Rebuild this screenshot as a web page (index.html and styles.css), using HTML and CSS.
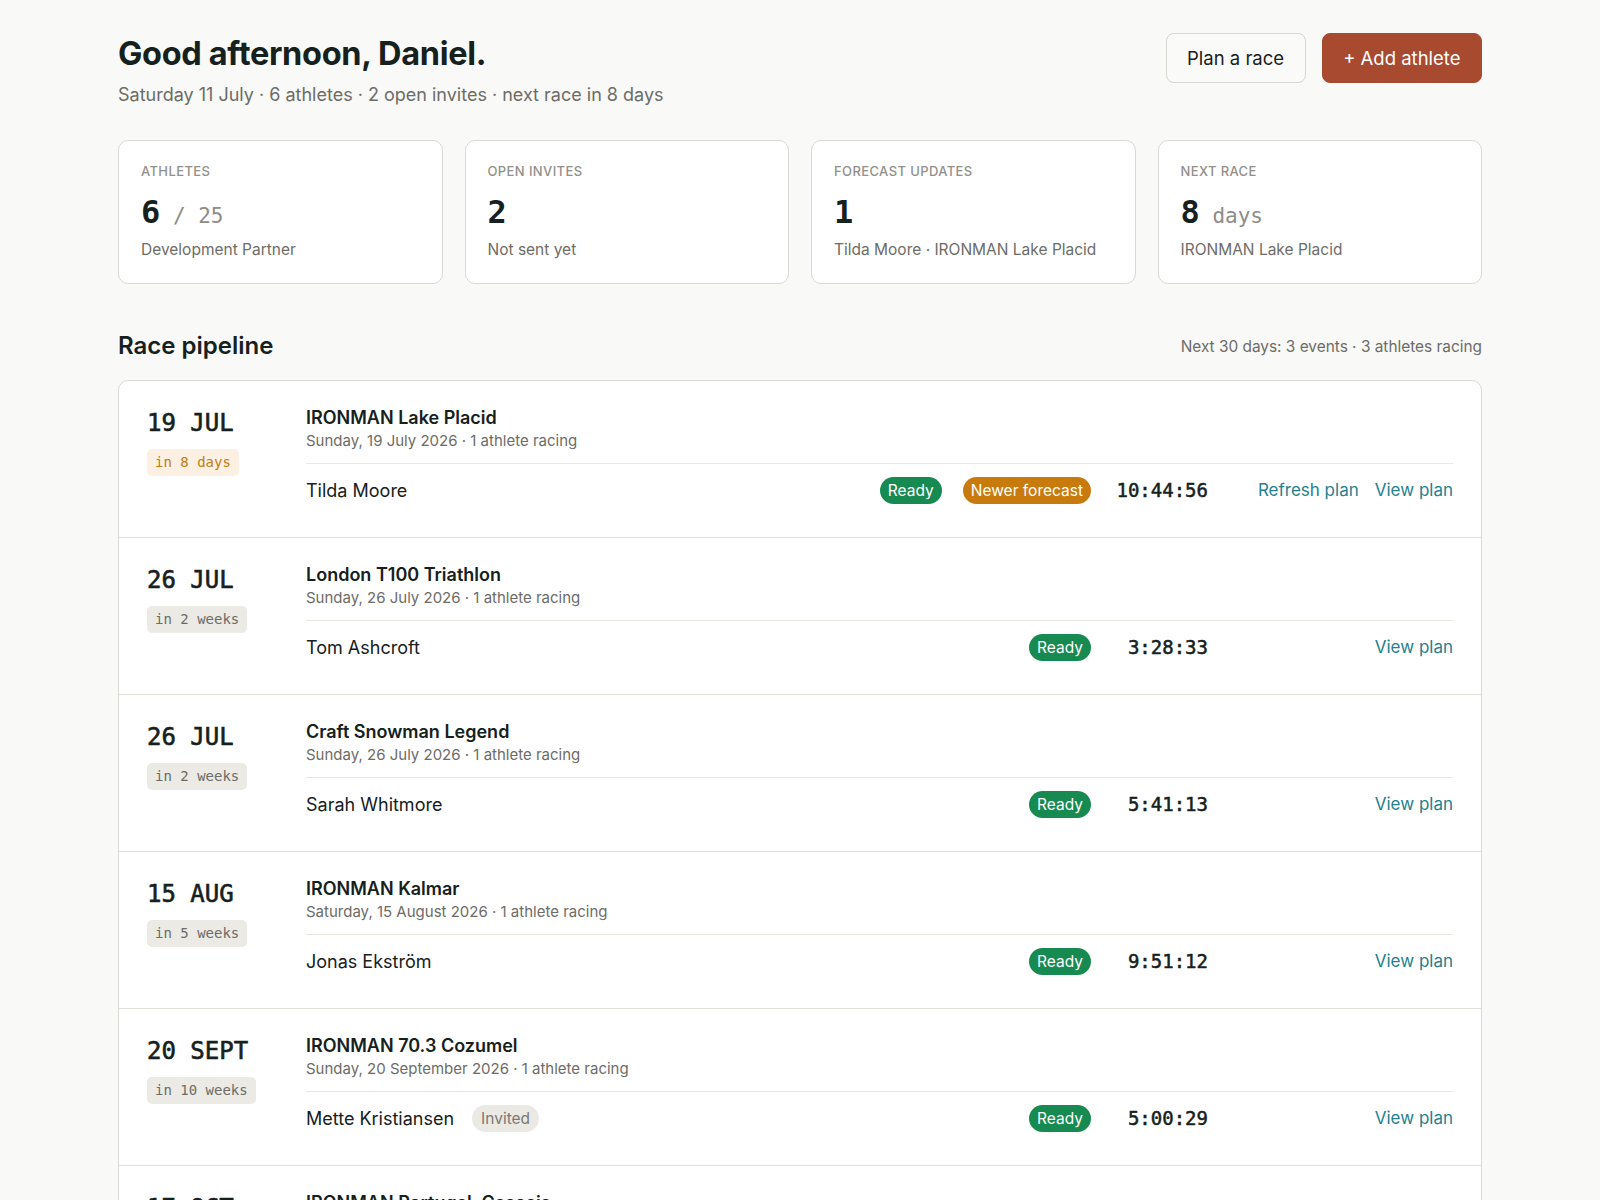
FILE: index.html
```html
<!DOCTYPE html>
<html lang="en">
<head>
    <meta charset="UTF-8">
    <meta name="viewport" content="width=device-width, initial-scale=1.0">
    <title>Coach Dashboard</title>
    <link rel="stylesheet" href="styles.css">
</head>
<body>
    <main class="page">
        <header class="top">
            <div>
                <h1>Good afternoon, Daniel.</h1>
                <p class="meta">Saturday 11 July · 6 athletes · 2 open invites · next race in 8 days</p>
            </div>
            <div class="top-actions">
                <button class="btn">Plan a race</button>
                <button class="btn btn-primary">+ Add athlete</button>
            </div>
        </header>

        <section class="stats">
            <div class="stat">
                <div class="stat-label">Athletes</div>
                <div class="stat-value">6<span class="stat-unit"> / 25</span></div>
                <div class="stat-sub">Development Partner</div>
            </div>
            <div class="stat">
                <div class="stat-label">Open invites</div>
                <div class="stat-value">2</div>
                <div class="stat-sub">Not sent yet</div>
            </div>
            <div class="stat">
                <div class="stat-label">Forecast updates</div>
                <div class="stat-value">1</div>
                <div class="stat-sub">Tilda Moore · IRONMAN Lake Placid</div>
            </div>
            <div class="stat">
                <div class="stat-label">Next race</div>
                <div class="stat-value">8<span class="stat-unit"> days</span></div>
                <div class="stat-sub">IRONMAN Lake Placid</div>
            </div>
        </section>

        <div class="section-head">
            <h2>Race pipeline</h2>
            <span class="section-note">Next 30 days: 3 events · 3 athletes racing</span>
        </div>

        <section class="pipeline">
            <div class="race">
                <div class="race-date">
                    <div class="date">19 JUL</div>
                    <span class="when soon">in 8 days</span>
                </div>
                <div class="race-body">
                    <div class="race-name">IRONMAN Lake Placid</div>
                    <div class="race-sub">Sunday, 19 July 2026 · 1 athlete racing</div>
                    <div class="athlete">
                        <span class="athlete-name">Tilda Moore</span>
                        <div class="pills">
                            <span class="pill ready">Ready</span>
                            <span class="pill newer">Newer forecast</span>
                        </div>
                        <span class="time">10:44:56</span>
                        <div class="links">
                            <a href="#">Refresh plan</a>
                            <a href="#">View plan</a>
                        </div>
                    </div>
                </div>
            </div>

            <div class="race">
                <div class="race-date">
                    <div class="date">26 JUL</div>
                    <span class="when">in 2 weeks</span>
                </div>
                <div class="race-body">
                    <div class="race-name">London T100 Triathlon</div>
                    <div class="race-sub">Sunday, 26 July 2026 · 1 athlete racing</div>
                    <div class="athlete">
                        <span class="athlete-name">Tom Ashcroft</span>
                        <div class="pills">
                            <span class="pill ready">Ready</span>
                        </div>
                        <span class="time">3:28:33</span>
                        <div class="links">
                            <a href="#">View plan</a>
                        </div>
                    </div>
                </div>
            </div>

            <div class="race">
                <div class="race-date">
                    <div class="date">26 JUL</div>
                    <span class="when">in 2 weeks</span>
                </div>
                <div class="race-body">
                    <div class="race-name">Craft Snowman Legend</div>
                    <div class="race-sub">Sunday, 26 July 2026 · 1 athlete racing</div>
                    <div class="athlete">
                        <span class="athlete-name">Sarah Whitmore</span>
                        <div class="pills">
                            <span class="pill ready">Ready</span>
                        </div>
                        <span class="time">5:41:13</span>
                        <div class="links">
                            <a href="#">View plan</a>
                        </div>
                    </div>
                </div>
            </div>

            <div class="race">
                <div class="race-date">
                    <div class="date">15 AUG</div>
                    <span class="when">in 5 weeks</span>
                </div>
                <div class="race-body">
                    <div class="race-name">IRONMAN Kalmar</div>
                    <div class="race-sub">Saturday, 15 August 2026 · 1 athlete racing</div>
                    <div class="athlete">
                        <span class="athlete-name">Jonas Ekström</span>
                        <div class="pills">
                            <span class="pill ready">Ready</span>
                        </div>
                        <span class="time">9:51:12</span>
                        <div class="links">
                            <a href="#">View plan</a>
                        </div>
                    </div>
                </div>
            </div>

            <div class="race">
                <div class="race-date">
                    <div class="date">20 SEPT</div>
                    <span class="when">in 10 weeks</span>
                </div>
                <div class="race-body">
                    <div class="race-name">IRONMAN 70.3 Cozumel</div>
                    <div class="race-sub">Sunday, 20 September 2026 · 1 athlete racing</div>
                    <div class="athlete">
                        <span class="athlete-name">Mette Kristiansen <span class="pill invited">Invited</span></span>
                        <div class="pills">
                            <span class="pill ready">Ready</span>
                        </div>
                        <span class="time">5:00:29</span>
                        <div class="links">
                            <a href="#">View plan</a>
                        </div>
                    </div>
                </div>
            </div>

            <div class="race">
                <div class="race-date">
                    <div class="date">17 OCT</div>
                    <span class="when">in 14 weeks</span>
                </div>
                <div class="race-body">
                    <div class="race-name">IRONMAN Portugal, Cascais</div>
                    <div class="race-sub">Saturday, 17 October 2026 · 1 athlete racing</div>
                    <div class="athlete">
                        <span class="athlete-name">Jonas Ekström</span>
                        <div class="pills">
                            <span class="pill ready">Ready</span>
                        </div>
                        <span class="time">9:12:40</span>
                        <div class="links">
                            <a href="#">View plan</a>
                        </div>
                    </div>
                </div>
            </div>
        </section>
    </main>
</body>
</html>
```

FILE: styles.css
```css
body {
    margin: 0;
    background: #f9f9f7;
    color: #16211d;
    font-family: 'Inter', 'Noto Sans', sans-serif;
}
.page {
    max-width: 1364px;
    margin: 0 auto;
    padding: 35px 0 40px;
}
.top {
    display: flex;
    justify-content: space-between;
    align-items: flex-start;
}
h1 {
    margin: 0;
    font-size: 32.5px;
    line-height: 38px;
    font-weight: 700;
    letter-spacing: -0.01em;
}
.meta {
    margin: 9px 0 0;
    font-size: 18px;
    line-height: 26px;
    color: #6d6c67;
}
.top-actions {
    display: flex;
    gap: 16px;
    margin-top: -2px;
}
.btn {
    height: 50px;
    padding: 0 20.5px;
    border: 1px solid #d7d6d1;
    border-radius: 8px;
    background: #fafaf8;
    color: #16211d;
    font-family: inherit;
    font-size: 18.5px;
    cursor: pointer;
}
.btn-primary {
    background: #a84a2f;
    border-color: #a84a2f;
    color: #fff;
}
.stats {
    display: grid;
    grid-template-columns: repeat(4, 1fr);
    gap: 22px;
    margin-top: 32px;
}
.stat {
    background: #fff;
    border: 1px solid #dad9d4;
    border-radius: 10px;
    padding: 21px 22px 22px;
}
.stat-label {
    font-size: 13px;
    line-height: 18px;
    text-transform: uppercase;
    letter-spacing: 0.03em;
    color: #919089;
    font-weight: 500;
}
.stat-value {
    margin-top: 12px;
    font-family: 'DejaVu Sans Mono', monospace;
    font-size: 32px;
    line-height: 40px;
    font-weight: 700;
}
.stat-unit {
    font-size: 21px;
    line-height: 1;
    font-weight: 400;
    color: #8d8c86;
}
.stat-sub {
    margin-top: 7px;
    font-size: 15.5px;
    line-height: 22px;
    color: #6d6c67;
}
.section-head {
    display: flex;
    justify-content: space-between;
    align-items: center;
    margin-top: 46px;
}
h2 {
    margin: 0;
    font-size: 24px;
    line-height: 32px;
    font-weight: 600;
}
.section-note {
    font-size: 15.4px;
    color: #6d6c67;
}
.pipeline {
    margin-top: 18px;
    background: #fff;
    border: 1px solid #dad9d4;
    border-radius: 10px;
    overflow: hidden;
}
.race {
    display: flex;
    gap: 24px;
    padding: 25px 28px 31px;
    border-bottom: 1px solid #e0dfda;
}
.race-date {
    width: 135px;
    flex-shrink: 0;
    padding-top: 1px;
}
.date {
    font-family: 'DejaVu Sans Mono', monospace;
    font-size: 24px;
    line-height: 32px;
    font-weight: 400;
    -webkit-text-stroke: 0.6px currentColor;
}
.when {
    display: inline-block;
    margin-top: 10px;
    padding: 0 8px;
    height: 27px;
    line-height: 27px;
    border-radius: 5px;
    background: #ebeae5;
    color: #6d6c67;
    font-family: 'DejaVu Sans Mono', monospace;
    font-size: 14px;
}
.when.soon {
    background: #fbf0e1;
    color: #c57b16;
}
.race-body {
    flex: 1;
}
.race-name {
    font-size: 18px;
    line-height: 24px;
    font-weight: 600;
}
.race-sub {
    font-size: 15px;
    line-height: 22px;
    color: #6d6c67;
}
.athlete {
    display: flex;
    align-items: center;
    margin-top: 11px;
    padding-top: 10px;
    border-top: 1px solid #e8e7e2;
    min-height: 32px;
}
.athlete-name {
    flex: 1;
    display: flex;
    align-items: center;
    gap: 18px;
    font-size: 18px;
}
.pills {
    display: flex;
    gap: 21px;
}
.pill {
    display: inline-block;
    height: 27px;
    line-height: 27px;
    padding: 0 8px;
    border-radius: 14px;
    font-size: 15.5px;
    color: #fff;
}
.ready {
    background: #178a52;
}
.newer {
    background: #c97a0c;
}
.invited {
    padding: 0 9px;
    background: #ebe9e4;
    color: #7a7872;
}
.time {
    width: 117px;
    text-align: right;
    font-family: 'DejaVu Sans Mono', monospace;
    font-size: 19px;
    font-weight: 400;
    -webkit-text-stroke: 0.5px currentColor;
}
.links {
    width: 245px;
    display: flex;
    justify-content: flex-end;
    gap: 16px;
}
.links a {
    color: #24808f;
    text-decoration: none;
    font-size: 17px;
}
```
